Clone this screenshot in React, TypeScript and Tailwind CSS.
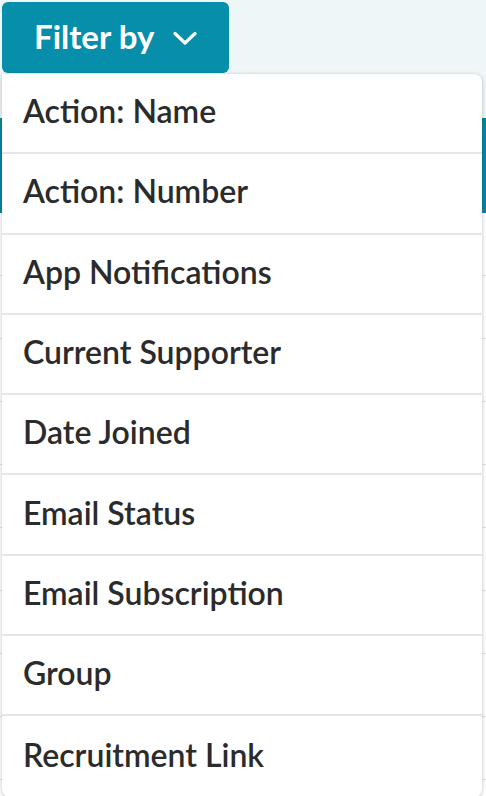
import React from "react";

const options = [
  "Action: Name",
  "Action: Number",
  "App Notifications",
  "Current Supporter",
  "Date Joined",
  "Email Status",
  "Email Subscription",
  "Group",
  "Recruitment Link",
];

function Chevron() {
  return (
    <svg width="24" height="15" viewBox="0 0 24 15" fill="none" className="ml-[19px] mt-[3px]">
      <path d="M2 2.5 L12 12 L22 2.5" stroke="white" strokeWidth="3.2" strokeLinecap="round" strokeLinejoin="round" />
    </svg>
  );
}

export default function App() {
  return (
    <div className="relative h-[796px] w-[486px] overflow-hidden bg-white font-['Lato',sans-serif]">
      {/* page behind the dropdown */}
      <div className="h-[118px] bg-[#eff6f8] p-[2px]">
        <button className="flex h-[71px] w-[227px] items-center rounded-[6px] bg-[#068eab] pl-[32px] pb-[2px] text-[33px] font-bold text-white">
          Filter by
          <Chevron />
        </button>
      </div>
      <div className="h-[95px] bg-[#0a85a1]" />
      <div className="flex flex-col">
        {Array.from({ length: 10 }).map((_, i) => (
          <div key={i} className="h-[63px] border-b border-[#e3e3e3]" />
        ))}
      </div>

      {/* dropdown menu */}
      <div className="absolute left-[2px] top-[74px] w-[480px] overflow-hidden rounded-b-[8px] rounded-tr-[8px] bg-white shadow-[0_1px_4px_rgba(0,0,0,0.25)]">
        {options.map((opt, i) => (
          <div
            key={opt}
            className={`flex h-[80.3px] items-center pl-[21px] pb-[4px] text-[32px] font-semibold text-[#2b2b2b] ${
              i < options.length - 1 ? "border-b-2 border-[#e6e6e6]" : ""
            }`}
          >
            {opt}
          </div>
        ))}
      </div>
    </div>
  );
}
